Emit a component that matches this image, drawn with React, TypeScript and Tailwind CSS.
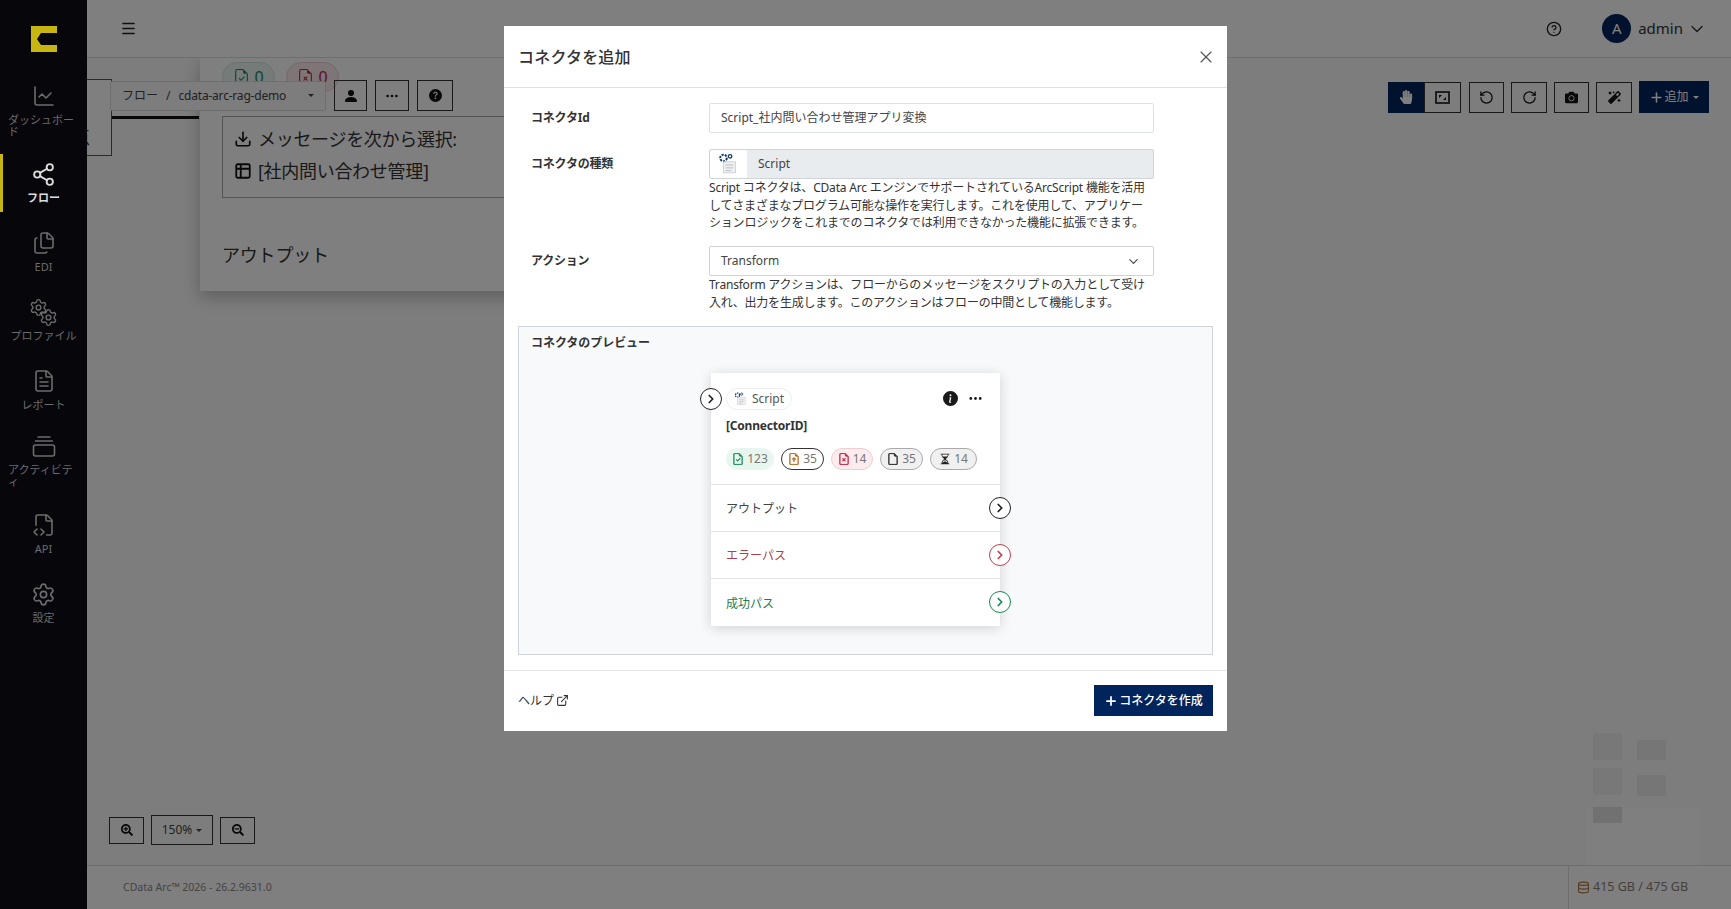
import type { ReactNode } from 'react'
import { ChevronDown, ChevronRight, Database, Download, ExternalLink, FileCode2, Files, FileText, Menu, Plus, RotateCcw, RotateCw, Settings, Share2, ChartLine, Table2, X, CircleHelp } from 'lucide-react'
import { BsFileEarmarkCheck, BsFileEarmarkArrowUp, BsFileEarmarkX, BsFileEarmark, BsHourglassSplit, BsInfoCircleFill, BsPersonFill, BsQuestionCircleFill, BsThreeDots } from 'react-icons/bs'
import { FaCamera, FaHandPaper, FaMagic, FaSearchMinus, FaSearchPlus } from 'react-icons/fa'

const FONT = 'font-["Noto_Sans","Noto_Sans_CJK_JP",sans-serif]'

// the two stacked layers of the activity entry
function LayersIcon() {
  return (
    <svg width="24" height="21" viewBox="0 0 24 21" fill="none" stroke="currentColor" strokeWidth="1.6" strokeLinecap="round">
      <path d="M6 1h12M3.5 5h17" />
      <rect x="1.5" y="9" width="21" height="11" rx="2" />
    </svg>
  )
}

function CogsIcon() {
  return (
    <div className="relative w-[29px] h-[29px]">
      <Settings size={19} strokeWidth={1.8} className="absolute left-0 top-0" />
      <Settings size={19} strokeWidth={1.8} className="absolute right-0 bottom-0" />
    </div>
  )
}

function ScriptIcon({ size }: { size: number }) {
  return (
    <svg width={size} height={size} viewBox="0 0 20 20" fill="none">
      <circle cx="5" cy="4.5" r="3" stroke="#123a6b" strokeWidth="1.8" strokeDasharray="2 1" />
      <circle cx="11" cy="3" r="1.6" stroke="#123a6b" strokeWidth="1.1" />
      <rect x="5" y="8" width="11" height="10" fill="#eef0f2" stroke="#c5c9ce" strokeWidth="0.7" />
      <path d="M7 11h7M7 13.5h7M7 16h5" stroke="#b5bac0" strokeWidth="0.8" />
    </svg>
  )
}

const NAV: { label: string; icon: ReactNode; cls: string; active?: boolean }[] = [
  { label: 'ダッシュボード', icon: <ChartLine size={24} strokeWidth={1.6} />, cls: '-mb-[3px]' },
  { label: 'フロー', icon: <Share2 size={25} strokeWidth={1.8} />, cls: '', active: true },
  { label: 'EDI', icon: <Files size={24} strokeWidth={1.6} />, cls: '' },
  { label: 'プロファイル', icon: <CogsIcon />, cls: '' },
  { label: 'レポート', icon: <FileText size={24} strokeWidth={1.6} />, cls: '-mb-[4px]' },
  { label: 'アクティビティ', icon: <LayersIcon />, cls: '-mb-[2px]' },
  { label: 'API', icon: <FileCode2 size={24} strokeWidth={1.6} />, cls: '' },
  { label: '設定', icon: <Settings size={25} strokeWidth={1.6} />, cls: '' },
]

function Sidebar() {
  return (
    <aside className="relative z-20 w-[87px] shrink-0 h-full bg-[#06060b] flex flex-col">
      <div className="h-[76px] pt-[26px] pl-[31px] shrink-0">
        <svg width="26" height="26" viewBox="0 0 26 26">
          <path d="M0 0h26v7H10L6 13l4 6h16v7H0z" fill="#c7b512" />
        </svg>
      </div>
      <nav className="flex flex-col gap-[11px]">
        {NAV.map(item => (
          <div key={item.label} className={`relative pt-[8px] pb-[8px] ${item.cls} ${item.active ? 'text-[#dcdcdc]' : 'text-[#6c6c6c]'}`}>
            {item.active && <div className="absolute left-0 top-0 bottom-0 w-[3px] bg-[#c7b512]" />}
            <div className="h-[24px] flex items-center justify-center">{item.icon}</div>
            <div className={`mt-[6px] px-[8px] text-[11px] leading-[12px] break-all ${item.active ? 'font-bold text-center' : item.label.length > 6 ? 'text-left' : 'text-center'}`}>
              {item.label}
            </div>
          </div>
        ))}
      </nav>
    </aside>
  )
}

function ToolBtn({ children, cls = 'w-[35px]' }: { children: ReactNode; cls?: string }) {
  return (
    <button className={`h-[31px] flex items-center justify-center border border-[#333] text-[#111] text-[12px] ${cls}`}>
      {children}
    </button>
  )
}

function Caret() {
  return <span className="ml-1 inline-block border-x-[3px] border-x-transparent border-t-[3px] border-t-current" />
}

function Canvas() {
  return (
    <div className="relative flex-1 bg-[#fafafa] overflow-hidden">
      {/* nodes behind the dialog */}
      <div className="absolute left-0 top-[21px] w-[25px] h-[77px] border border-[#555] border-l-0 bg-white overflow-hidden">
        <span className="absolute -left-[15px] top-[45px] text-[18px] leading-[24px] text-[#333]">点</span>
      </div>
      <div className="absolute left-[25px] top-[58px] w-[87px] h-[3px] bg-[#111]" />
      <div className="absolute left-[113px] top-0 w-[340px] h-[233px] bg-white shadow-[0_6px_16px_rgba(0,0,0,0.25)]">
        <div className="absolute left-[22px] top-[4px] flex gap-[11px]">
          <div className="w-[53px] h-[30px] rounded-full border border-[#cfe8dc] bg-[#e9f7f0] flex items-center justify-center gap-1 text-[#198754] text-[16px]">
            <BsFileEarmarkCheck size={17} />0
          </div>
          <div className="w-[53px] h-[30px] rounded-full border border-[#f2cdd3] bg-[#fbeaec] flex items-center justify-center gap-1 text-[#c01f3c] text-[16px]">
            <BsFileEarmarkX size={17} />0
          </div>
        </div>
        <div className="absolute left-[22px] top-[58px] w-[320px] h-[82px] border border-[#aaa] pl-[11px] pt-[6px] text-[18px] leading-[32px] text-[#333] tracking-[-0.3px]">
          <div className="flex items-center gap-[6px] whitespace-nowrap"><Download size={18} strokeWidth={2.2} className="text-[#111]" />メッセージを次から選択:</div>
          <div className="flex items-center gap-[6px] whitespace-nowrap"><Table2 size={18} strokeWidth={2.4} className="text-[#111]" />[社内問い合わせ管理]</div>
        </div>
        <div className="absolute left-[22px] top-[184px] text-[18px] leading-[27px] text-[#333] tracking-[-0.2px]">アウトプット</div>
      </div>

      <div className="absolute left-[23px] top-[22px] flex items-center gap-[8px]">
        <div className="w-[216px] h-[30px] bg-[#fafafa] border border-[#ddd] rounded-[2px] flex items-center pl-[11px] pr-[11px] text-[12px] text-[#444]">
          <span>フロー</span>
          <span className="mx-[8px]">/</span>
          <span className="flex-1 whitespace-nowrap tracking-[-0.2px]">cdata-arc-rag-demo</span>
          <Caret />
        </div>
        <ToolBtn cls="w-[33px]"><BsPersonFill size={16} /></ToolBtn>
        <ToolBtn cls="w-[34px]"><BsThreeDots size={14} /></ToolBtn>
        <ToolBtn cls="w-[36px]"><BsQuestionCircleFill size={13} /></ToolBtn>
      </div>

      <div className="absolute right-[22px] top-[23px] flex items-center">
        <div className="flex mr-[8px]">
          <button className="w-[36px] h-[31px] bg-[#00245c] text-white flex items-center justify-center"><FaHandPaper size={14} /></button>
          <button className="w-[37px] h-[31px] border border-[#333] flex items-center justify-center">
            <svg width="15" height="13" viewBox="0 0 15 13" fill="none" stroke="#111" strokeWidth="1.6">
              <rect x="1" y="1" width="13" height="11" />
              <path d="M4 4h3L4 7zM11 9H8l3-3z" fill="#111" stroke="none" />
            </svg>
          </button>
        </div>
        <div className="flex items-center gap-[7px]">
          <ToolBtn><RotateCcw size={15} /></ToolBtn>
          <ToolBtn cls="w-[36px]"><RotateCw size={15} /></ToolBtn>
          <ToolBtn><FaCamera size={13} /></ToolBtn>
          <ToolBtn cls="w-[36px]"><FaMagic size={13} /></ToolBtn>
          <button className="w-[70px] h-[32px] bg-[#00245c] text-white text-[12px] flex items-center justify-center">
            <Plus size={15} strokeWidth={2.5} />追加<Caret />
          </button>
        </div>
      </div>

      {/* minimap smudges */}
      <div className="absolute left-[1500px] top-[750px] w-[113px] h-[58px] bg-[#ffffff]" />
      <div className="absolute left-[1506px] top-[675px] w-[29px] h-[27px] bg-[#f0f0f0]" />
      <div className="absolute left-[1550px] top-[682px] w-[29px] h-[20px] bg-[#ececec]" />
      <div className="absolute left-[1506px] top-[710px] w-[29px] h-[27px] bg-[#f0f0f0]" />
      <div className="absolute left-[1550px] top-[717px] w-[29px] h-[21px] bg-[#ececec]" />
      <div className="absolute left-[1506px] top-[749px] w-[29px] h-[16px] bg-[#e2e2e2]" />

      <div className="absolute left-[22px] bottom-[20px] flex items-center gap-[7px]">
        <ToolBtn cls="w-[35px] !h-[27px]"><FaSearchPlus size={12} /></ToolBtn>
        <ToolBtn cls="w-[62px] !h-[30px] text-[#444]">150%<Caret /></ToolBtn>
        <ToolBtn cls="w-[35px] !h-[27px]"><FaSearchMinus size={12} /></ToolBtn>
      </div>
    </div>
  )
}

const PILLS = [
  { n: '123', w: 'w-[48px]', cls: 'bg-[#e7f6ee] border-[#e7f6ee] text-[#198754]', icon: <BsFileEarmarkCheck size={12} stroke="currentColor" strokeWidth={0.6} /> },
  { n: '35', w: 'w-[43px]', cls: 'bg-white border-[#333] text-[#b5651d]', icon: <BsFileEarmarkArrowUp size={12} stroke="currentColor" strokeWidth={0.6} /> },
  { n: '14', w: 'w-[42px]', cls: 'bg-[#fcecee] border-[#f3ccd2] text-[#c01f3c]', icon: <BsFileEarmarkX size={12} stroke="currentColor" strokeWidth={0.6} /> },
  { n: '35', w: 'w-[43px]', cls: 'bg-[#f0f0f0] border-[#aaa] text-[#222]', icon: <BsFileEarmark size={12} stroke="currentColor" strokeWidth={0.6} /> },
  { n: '14', w: 'w-[47px]', cls: 'bg-[#f0f0f0] border-[#aaa] text-[#222]', icon: <BsHourglassSplit size={12} /> },
]

function Port({ color, cls }: { color: string; cls: string }) {
  return (
    <div className={`absolute w-[22px] h-[22px] rounded-full bg-white border flex items-center justify-center ${color} ${cls}`}>
      <ChevronRight size={14} strokeWidth={3} />
    </div>
  )
}

function PreviewCard() {
  const rows = [
    { label: 'アウトプット', text: 'text-[#444]', port: 'border-[#222] text-[#222]' },
    { label: 'エラーパス', text: 'text-[#ab3f50]', port: 'border-[#bd3f52] text-[#bd3f52]' },
    { label: '成功パス', text: 'text-[#1f7a55]', port: 'border-[#198754] text-[#198754]' },
  ]
  return (
    <div className="relative w-[289px] bg-white shadow-[0_2px_12px_rgba(0,0,0,0.16)]">
      <Port color="border-[#222] text-[#222]" cls="-left-[11px] top-[15px]" />
      <div className="h-[112.5px] pl-[15px] pt-[15px] pr-[17px] border-b border-[#e3e3e3]">
        <div className="flex items-center justify-between h-[22px]">
          <div className="h-[22px] w-[66px] rounded-full border border-[#eee] flex items-center justify-center gap-[4px] text-[12px] text-[#555]">
            <ScriptIcon size={14} />Script
          </div>
          <div className="flex items-center gap-[10px] text-[#1a1a1a]">
            <BsInfoCircleFill size={15} />
            <BsThreeDots size={15} />
          </div>
        </div>
        <div className="mt-[5px] h-[22px] leading-[22px] text-[12px] font-bold text-[#333] tracking-[-0.2px]">[ConnectorID]</div>
        <div className="mt-[11px] flex gap-[7px]">
          {PILLS.map((p, i) => (
            <div key={i} className={`h-[22px] ${p.w} rounded-full border flex items-center justify-center gap-[3px] text-[12px] ${p.cls}`}>
              {p.icon}<span className="text-[#777]">{p.n}</span>
            </div>
          ))}
        </div>
      </div>
      {rows.map((r, i) => (
        <div key={r.label} className={`relative h-[47px] pl-[15px] pt-[2px] flex items-center text-[12px] ${r.text} ${i < 2 ? 'border-b border-[#e3e3e3]' : ''}`}>
          {r.label}
          <Port color={r.port} cls="-right-[11px] top-[12px]" />
        </div>
      ))}
    </div>
  )
}

function Dialog() {
  return (
    <div className="absolute inset-0 z-30 flex justify-center items-start pt-[26px] text-[#333]">
      <div className="w-[723px] bg-white">
        <div className="h-[62px] pl-[14px] pr-[11px] flex items-center justify-between border-b border-[#dee2e6]">
          <h2 className="text-[16px] font-medium text-[#333] tracking-[0.2px]">コネクタを追加</h2>
          <X size={20} strokeWidth={1.4} className="text-[#555]" />
        </div>
        <div className="px-[14px] pt-[15px]">
          <div className="flex items-center h-[30px]">
            <label className="w-[191px] pl-[13px] text-[12px] font-bold tracking-[-0.2px]">コネクタId</label>
            <div className="w-[445px] h-[30px] border border-[#dee2e6] rounded-[2px] pl-[11px] flex items-center text-[12px] text-[#444]">Script_社内問い合わせ管理アプリ変換</div>
          </div>
          <div className="flex mt-[16px]">
            <label className="w-[191px] pl-[13px] text-[12px] font-bold leading-[30px] tracking-[-0.2px]">コネクタの種類</label>
            <div className="w-[445px]">
              <div className="h-[30px] border border-[#ced4da] rounded-[2px] flex items-stretch">
                <div className="w-[37px] flex items-center justify-center shrink-0"><ScriptIcon size={22} /></div>
                <div className="flex-1 bg-[#e9ecef] pl-[11px] flex items-center text-[12px] text-[#444]">Script</div>
              </div>
              <p className="text-[12px] leading-[17.7px] tracking-[-0.2px] whitespace-nowrap">
                Script コネクタは、CData Arc エンジンでサポートされているArcScript 機能を活用<br />
                してさまざまなプログラム可能な操作を実行します。これを使用して、アプリケー<br />
                ションロジックをこれまでのコネクタでは利用できなかった機能に拡張できます。
              </p>
            </div>
          </div>
          <div className="flex mt-[14px]">
            <label className="w-[191px] pl-[13px] text-[12px] font-bold leading-[30px] tracking-[-0.2px]">アクション</label>
            <div className="w-[445px]">
              <div className="h-[30px] border border-[#ced4da] rounded-[2px] pl-[11px] pr-[12px] flex items-center justify-between text-[12px] text-[#444]">
                Transform
                <ChevronDown size={15} strokeWidth={1.8} />
              </div>
              <p className="text-[12px] leading-[17.7px] tracking-[-0.2px] whitespace-nowrap">
                Transform アクションは、フローからのメッセージをスクリプトの入力として受け<br />
                入れ、出力を生成します。このアクションはフローの中間として機能します。
              </p>
            </div>
          </div>
          <div className="mt-[14px] h-[329px] border border-[#ced4da] bg-[#f8f9fa]">
            <div className="pl-[12px] pt-[7px] text-[12px] leading-[18px] font-bold tracking-[-0.05px]">コネクタのプレビュー</div>
            <div className="pl-[192px] pt-[21px]"><PreviewCard /></div>
          </div>
        </div>
        <div className="mt-[15px] h-[61px] border-t border-[#e5e7eb] px-[14px] flex items-center justify-between">
          <a className="flex items-center gap-[2px] text-[12px] text-[#333]">ヘルプ<ExternalLink size={13} strokeWidth={2} /></a>
          <button className="w-[119px] h-[31px] bg-[#00245c] text-white text-[12px] font-medium flex items-center justify-center gap-[1px]">
            <Plus size={14} strokeWidth={3} />コネクタを作成
          </button>
        </div>
      </div>
    </div>
  )
}

export default function App() {
  return (
    <div className={`relative flex h-screen w-full overflow-hidden bg-white ${FONT}`}>
      <Sidebar />
      <main className="flex-1 min-w-0 flex flex-col">
        <header className="h-[58px] shrink-0 border-b border-[#ddd] flex items-center justify-between pl-[33px] pr-[24px] text-[#333]">
          <Menu size={17} strokeWidth={2} className="text-[#222]" />
          <div className="flex items-center">
            <CircleHelp size={16} className="mr-[40px] text-[#222]" />
            <div className="w-[29px] h-[29px] rounded-full bg-[#00245c] text-white text-[15px] flex items-center justify-center mr-[7px]">A</div>
            <span className="text-[15px] mr-[4px]">admin</span>
            <ChevronDown size={20} strokeWidth={1.6} />
          </div>
        </header>
        <Canvas />
        <footer className="h-[44px] shrink-0 border-t border-[#ddd] flex items-stretch justify-between text-[10.5px] text-[#888]">
          <div className="pl-[36px] flex items-center">CData Arc™ 2026 - 26.2.9631.0</div>
          <div className="w-[163px] border-l border-[#ddd] pl-[8px] flex items-center gap-[2px] text-[12.5px] text-[#b0703c]">
            <Database size={13} />
            <span className="text-[#8a8078] ml-[1px]">415 GB / 475 GB</span>
          </div>
        </footer>
      </main>
      <div className="absolute inset-0 z-10 bg-black/50" />
      <Dialog />
    </div>
  )
}
